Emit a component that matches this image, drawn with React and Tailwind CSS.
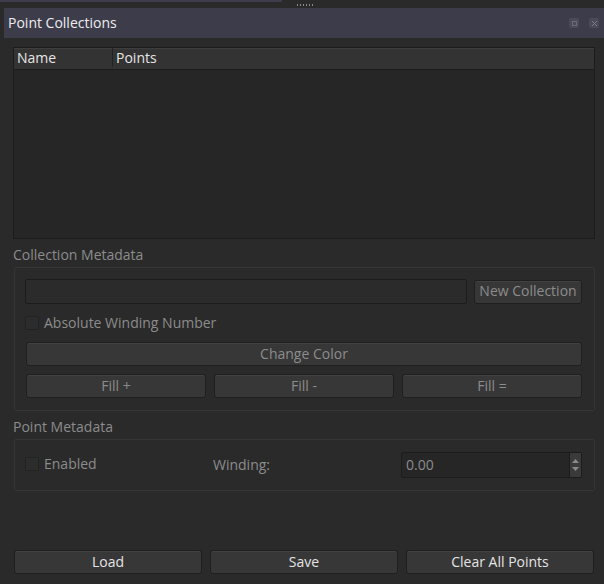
import React from "react";

const font = { fontFamily: '"Open Sans", "Noto Sans", sans-serif' };

const Btn = ({ children, className = "", enabled = false }) => (
  <div
    className={`h-[24px] pb-[2px] flex items-center justify-center rounded-[3px] border border-[#1f1f1f] bg-[#373737] shadow-[inset_0_1px_0_#424242] text-[14px] ${
      enabled ? "text-[#e4e4e4]" : "text-[#8c8c8c]"
    } ${className}`}
  >
    {children}
  </div>
);

const Check = ({ label }) => (
  <div className="flex items-center gap-[5px]">
    <div className="w-[14px] h-[14px] border border-[#222] bg-[#2c2c2c] rounded-[1px]" />
    <span className="text-[14px] text-[#8c8c8c] pb-[2px]">{label}</span>
  </div>
);

export default function App() {
  return (
    <div className="w-[604px] h-[584px] bg-[#2a2a2a] overflow-hidden flex flex-col" style={font}>
      {/* top strip */}
      <div className="h-[8px] relative">
        <div className="w-[282px] h-[2px] bg-[#3d3d4b]" />
        <div className="absolute left-[297px] top-[4px] flex gap-[2px]">
          {[0, 1, 2, 3, 4, 5].map((i) => (
            <div key={i} className="w-[1px] h-[2px] bg-[#8a8a8a]" />
          ))}
        </div>
      </div>

      {/* title bar */}
      <div className="ml-[4px] h-[30px] bg-[#3c3c4b] flex items-center pl-[4px] pr-[5px]">
        <span className="text-[14px] text-[#ececec] pb-[2px]">Point Collections</span>
        <div className="ml-auto flex items-center gap-[10px]">
          <div className="w-[10px] h-[10px] rounded-[2px] bg-[#4b4b58] flex items-center justify-center">
            <div className="w-[5px] h-[5px] border border-[#6c6c78]" />
          </div>
          <div className="w-[10px] h-[10px] rounded-[2px] bg-[#4b4b58] flex items-center justify-center">
            <svg width="7" height="7" viewBox="0 0 7 7">
              <path d="M1 1L6 6M6 1L1 6" stroke="#7c7c88" strokeWidth="1" />
            </svg>
          </div>
        </div>
      </div>

      <div className="flex-1 flex flex-col pl-[13px] pr-[9px] pt-[9px]">
        {/* table */}
        <div className="h-[192px] border border-[#1c1c1c] bg-[#262626] flex flex-col">
          <div className="h-[22px] pb-[2px] bg-[#333333] border-b border-[#1c1c1c] flex text-[14px] text-[#e6e6e6] shadow-[inset_0_1px_0_#3e3e3e]">
            <div className="w-[99px] pl-[3px] flex items-center border-r border-[#222]">Name</div>
            <div className="pl-[3px] flex items-center">Points</div>
          </div>
        </div>

        {/* Collection Metadata */}
        <div className="mt-[8px] text-[14px] text-[#8c8c8c] h-[18px] leading-[16px]">Collection Metadata</div>
        <div className="mt-[2px] ml-[1px] h-[144px] border border-[#353535] rounded-[2px] pl-[10px] pr-[12px] pt-[11px] flex flex-col">
          <div className="flex items-center gap-[7px]">
            <div className="flex-1 h-[25px] border border-[#1c1c1c] bg-[#2b2b2b] rounded-[2px]" />
            <Btn className="w-[108px] h-[23px]">New Collection</Btn>
          </div>
          <div className="mt-[10px] h-[18px] flex items-center">
            <Check label="Absolute Winding Number" />
          </div>
          <Btn className="mt-[10px] ml-[1px]">Change Color</Btn>
          <div className="mt-[8px] ml-[1px] grid grid-cols-3 gap-[8px]">
            <Btn>Fill +</Btn>
            <Btn>Fill -</Btn>
            <Btn>Fill =</Btn>
          </div>
        </div>

        {/* Point Metadata */}
        <div className="mt-[8px] text-[14px] text-[#8c8c8c] h-[18px] leading-[16px]">Point Metadata</div>
        <div className="mt-[2px] ml-[1px] h-[52px] border border-[#353535] rounded-[2px] pl-[10px] pr-[12px] flex items-center">
          <div className="w-[188px] -mt-[2px]">
            <Check label="Enabled" />
          </div>
          <span className="text-[14px] text-[#8c8c8c] w-[188px] pb-[2px]">Winding:</span>
          <div className="flex-1 h-[26px] border border-[#1c1c1c] bg-[#262626] rounded-[2px] flex items-center">
            <span className="pl-[4px] pb-[2px] text-[14px] text-[#8c8c8c] flex-1">0.00</span>
            <div className="w-[12px] h-full border-l border-[#1c1c1c] bg-[#3a3a3a] flex flex-col items-center justify-center gap-[4px]">
              <svg width="7" height="4" viewBox="0 0 7 4"><path d="M0 4L3.5 0L7 4Z" fill="#8a8a8a" /></svg>
              <svg width="7" height="4" viewBox="0 0 7 4"><path d="M0 0L3.5 4L7 0Z" fill="#8a8a8a" /></svg>
            </div>
          </div>
        </div>

        <div className="flex-1" />

        {/* bottom buttons */}
        <div className="mb-[10px] ml-[1px] mr-[1px] grid grid-cols-3 gap-[8px]">
          <Btn enabled>Load</Btn>
          <Btn enabled>Save</Btn>
          <Btn enabled>Clear All Points</Btn>
        </div>
      </div>
    </div>
  );
}
